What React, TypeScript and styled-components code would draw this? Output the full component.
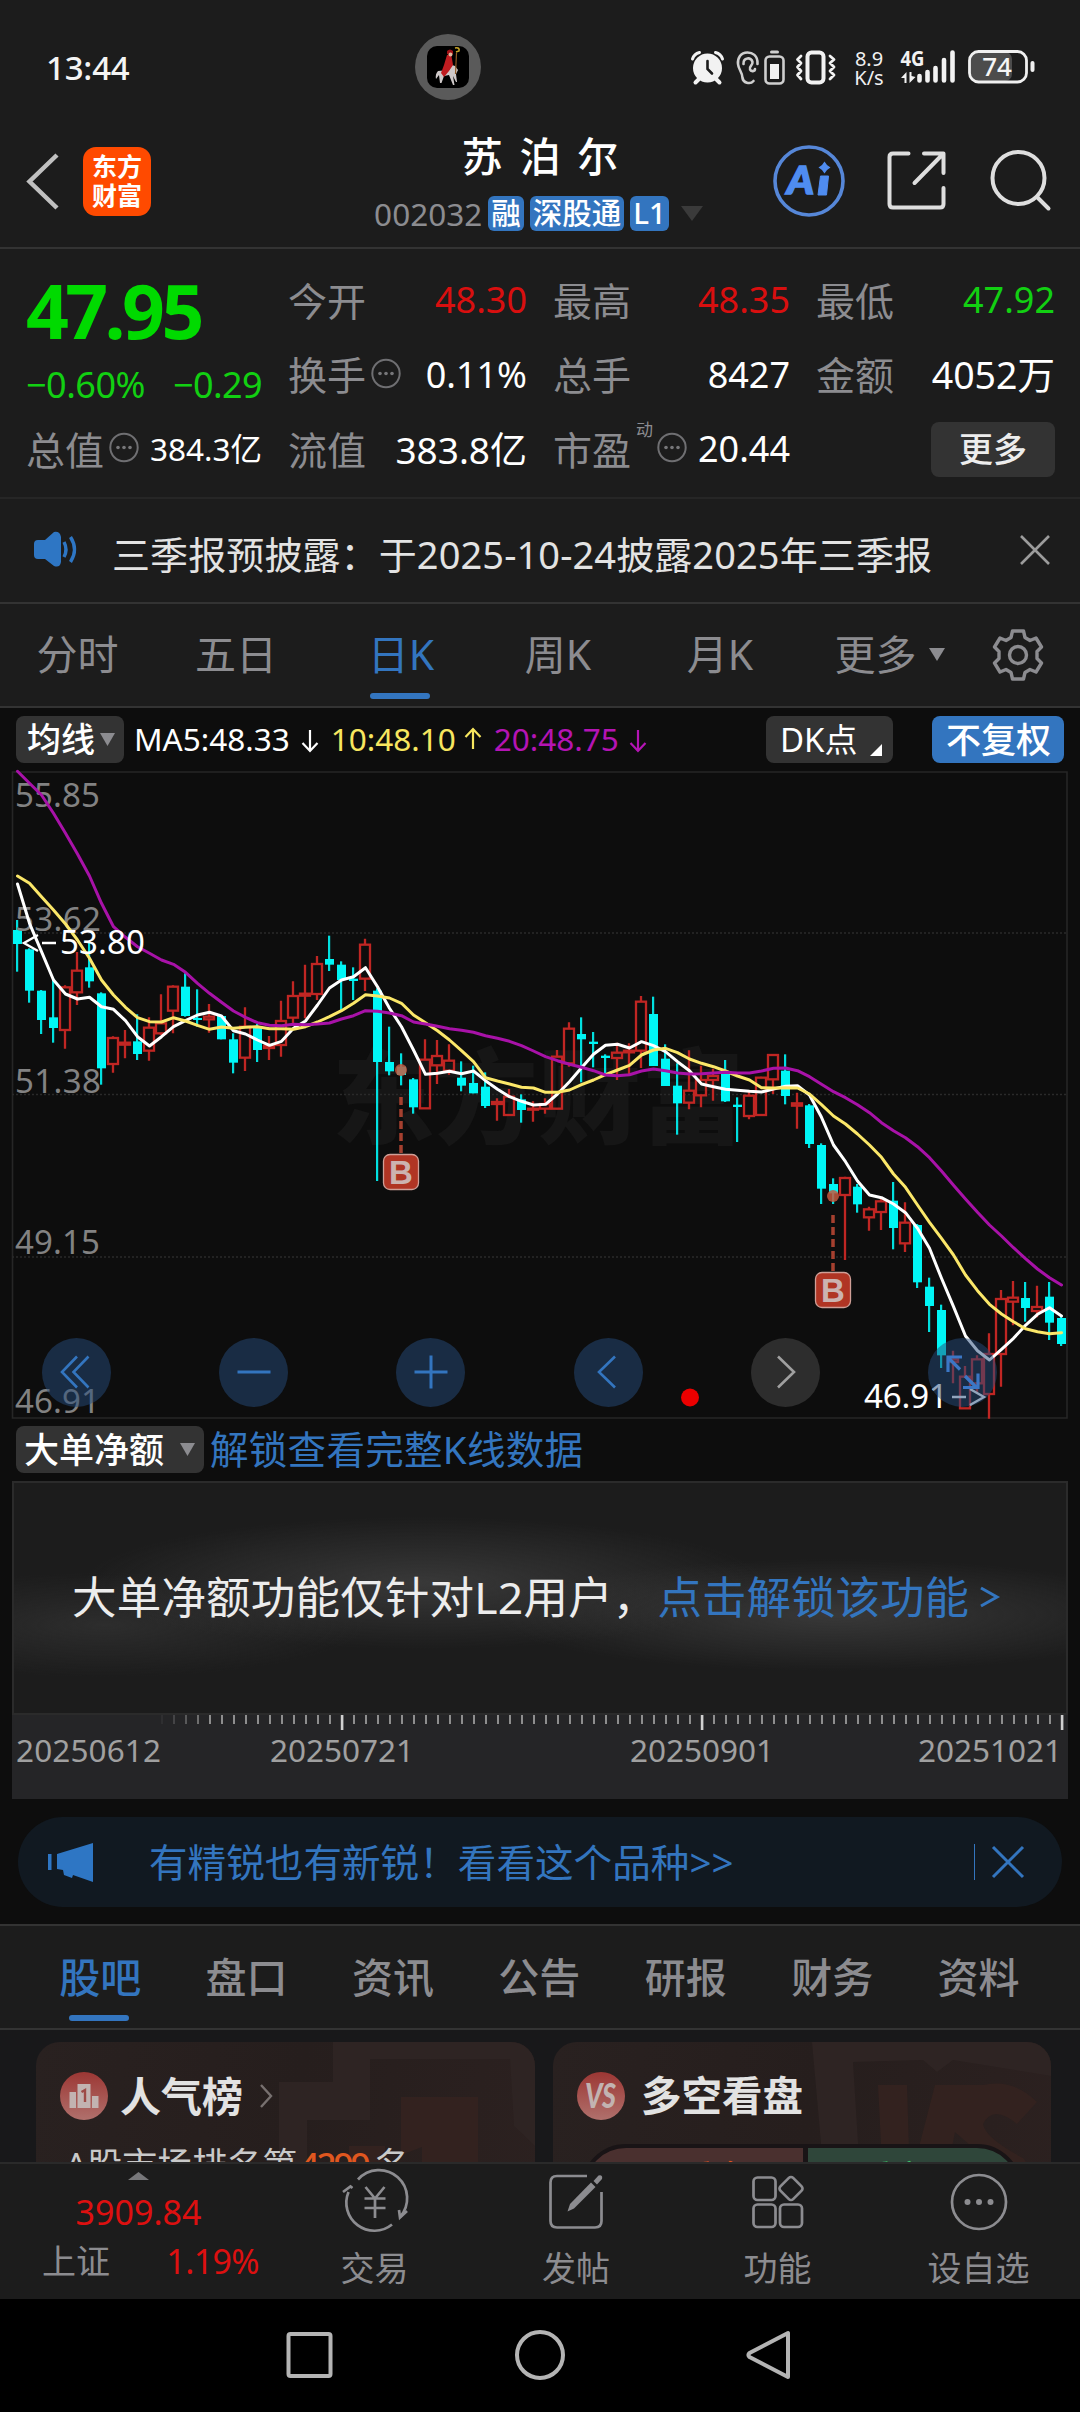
import React from "react";
import styled, { createGlobalStyle } from "styled-components";

const BLUE = "#3375bf";
const GREY = "#8c8c90";
const RED = "#d90f0f";
const GREEN = "#12d012";
const PANEL = "#1c1c1c";
const LINE = "#333333";

const Global = createGlobalStyle`
  html, body { margin: 0; padding: 0; background: #0d0d0d; }
  body { font-family: "Noto Sans", "Noto Sans CJK SC", sans-serif; color: #fff; }
  * { box-sizing: border-box; }
  svg { display: block; flex: none; overflow: visible; }
`;

const Page = styled.div`
  width: 1080px;
  height: 2412px;
  display: flex;
  flex-direction: column;
  overflow: hidden;
  background: #0d0d0d;
`;

const T = styled.span<{ $s: number; $c?: string; $w?: number; $ls?: number; $ml?: number; $pt?: number }>`
  font-size: ${(p) => p.$s}px;
  color: ${(p) => p.$c ?? "#fff"};
  font-weight: ${(p) => p.$w ?? 400};
  letter-spacing: ${(p) => p.$ls ?? 0}px;
  margin-left: ${(p) => p.$ml ?? 0}px;
  padding-top: ${(p) => p.$pt ?? 0}px;
  line-height: 1;
  white-space: pre;
`;

/* ---------- status bar ---------- */
const StatusBar = styled.header`
  height: 134px;
  display: grid;
  grid-template-columns: 415px 66px 1fr;
  align-items: center;
  background: ${PANEL};
`;
const Clock = styled.div`
  padding: 2px 0 0 46px;
  font-size: 33px;
  font-weight: 500;
  line-height: 1;
  letter-spacing: -0.2px;
  color: #f4f4f4;
`;
const Capsule = styled.div`
  width: 66px;
  height: 66px;
  border-radius: 50%;
  background: #5a5a5a;
  display: flex;
  align-items: center;
  justify-content: center;
`;
const StatusIcons = styled.div`
  display: flex;
  align-items: center;
  justify-content: flex-end;
  padding: 2px 45px 0 0;
`;
const Speed = styled.div`
  width: 34px;
  margin: 0 15px 0 15px;
  display: flex;
  flex-direction: column;
  align-items: center;
  font-size: 20px;
  line-height: 19px;
  color: #f0f0f0;
`;

/* ---------- title bar ---------- */
const TitleBar = styled.div`
  height: 115px;
  display: grid;
  grid-template-columns: 1fr 332px 1fr;
  background: ${PANEL};
  border-bottom: 2px solid ${LINE};
`;
const TitleLeft = styled.div`
  display: flex;
  align-items: center;
  gap: 21px;
  padding: 0 0 18px 24px;
`;
const Logo = styled.div`
  width: 68px;
  height: 69px;
  border-radius: 13px;
  background: #ff4a00;
  display: grid;
  place-content: center;
  font-size: 25px;
  line-height: 29px;
  font-weight: 700;
  text-align: center;
`;
const TitleCenter = styled.div`
  display: flex;
  flex-direction: column;
  align-items: center;
`;
const StockName = styled.h1`
  margin: 0;
  font-size: 41px;
  line-height: 44px;
  font-weight: 500;
  word-spacing: 6px;
`;
const CodeRow = styled.div`
  margin: 18px 3px 0 0;
  height: 36px;
  display: flex;
  align-items: center;
  gap: 6px;
`;
const Tag = styled.span`
  height: 35px;
  padding: 0 3px;
  border-radius: 6px;
  background: ${BLUE};
  font-size: 29.5px;
  line-height: 34px;
  font-weight: 500;
`;
const TitleRight = styled.div`
  display: flex;
  align-items: center;
  justify-content: flex-end;
  padding: 0 28px 18px 0;
`;

/* ---------- quote ---------- */
const Quote = styled.section`
  height: 250px;
  padding: 14px 24px 0 26px;
  display: grid;
  grid-template-columns: 236px 239px 237px 239px;
  column-gap: 26px;
  background: ${PANEL};
  border-bottom: 2px solid #262626;
`;
const QuoteCol = styled.div`
  display: flex;
  flex-direction: column;
`;
const Cell = styled.div<{ $h?: number }>`
  height: ${(p) => p.$h ?? 74.5}px;
  display: flex;
  align-items: center;
  & > span:last-child:not(:first-child) { margin-left: auto; }
`;
const Sup = styled.span`
  align-self: flex-start;
  margin: 9px 4px 0 5px;
  font-size: 17px;
  line-height: 1;
  color: ${GREY};
`;
const MoreButton = styled.button`
  width: 124px;
  height: 55px;
  margin-left: auto;
  border: 0;
  border-radius: 8px;
  background: #333;
  color: #ededed;
  font: 500 34px/51px "Noto Sans CJK SC", sans-serif;
  padding: 0 0 4px;
`;

/* ---------- news ---------- */
const News = styled.section`
  height: 105px;
  display: flex;
  align-items: center;
  padding: 0 25px 0 34px;
  background: ${PANEL};
  border-bottom: 2px solid ${LINE};
`;
const Push = styled.div`
  margin-left: auto;
  display: flex;
  align-items: center;
`;

/* ---------- tabs ---------- */
const Tabs = styled.nav<{ $cols: string; $h: number; $top?: boolean }>`
  height: ${(p) => p.$h}px;
  display: grid;
  grid-template-columns: ${(p) => p.$cols};
  background: ${PANEL};
  border-bottom: 2px solid ${LINE};
  border-top: ${(p) => (p.$top ? `2px solid ${LINE}` : "0")};
`;
const Tab = styled.div<{ $on?: boolean; $w?: number }>`
  position: relative;
  display: flex;
  align-items: center;
  justify-content: center;
  font-size: 41px;
  line-height: 1;
  font-weight: ${(p) => p.$w ?? 400};
  color: ${(p) => (p.$on ? BLUE : GREY)};
  &::after {
    content: "";
    display: ${(p) => (p.$on ? "block" : "none")};
    position: absolute;
    left: calc(50% - 31px);
    bottom: 7px;
    width: 60px;
    height: 6px;
    border-radius: 3px;
    background: ${BLUE};
  }
`;

/* ---------- chart ---------- */
const Legend = styled.div`
  height: 63px;
  display: flex;
  align-items: center;
  padding: 0 16px 0 16px;
`;
const Chip = styled.div<{ $w: number; $blue?: boolean; $pl?: number; $ml?: number }>`
  width: ${(p) => p.$w}px;
  height: 47px;
  margin-left: ${(p) => p.$ml ?? 0}px;
  border-radius: 8px;
  background: ${(p) => (p.$blue ? BLUE : "#333")};
  display: flex;
  align-items: center;
  padding-left: ${(p) => p.$pl ?? 10}px;
`;
const ChartArea = styled.div`
  position: relative;
  height: 648px;
`;
const Controls = styled.div`
  position: absolute;
  left: 42px;
  right: 83px;
  top: 567px;
  display: flex;
  justify-content: space-between;
`;
const RoundBtn = styled.div<{ $off?: boolean }>`
  width: 69px;
  height: 69px;
  border-radius: 50%;
  background: ${(p) => (p.$off ? "rgba(58,58,58,.72)" : "rgba(37,76,124,.5)")};
  display: grid;
  place-items: center;
`;
const SubLegend = styled.div`
  height: 62px;
  display: flex;
  align-items: center;
  padding-left: 16px;
`;
const LockBox = styled.div`
  height: 235px;
  margin: 0 12px;
  padding: 0 0 2px 58px;
  display: flex;
  align-items: center;
  border: 2px solid #2b2b2b;
  background:
    radial-gradient(ellipse 340px 66px at 410px 100px, rgba(66,66,66,.75), transparent),
    radial-gradient(ellipse 340px 56px at 820px 132px, rgba(66,66,66,.75), transparent),
    radial-gradient(ellipse 260px 52px at 90px 142px, rgba(52,52,52,.7), transparent),
    ${PANEL};
`;
const DateStrip = styled.div`
  height: 84px;
  margin: 0 12px;
  background: #252527;
`;

/* ---------- promo ---------- */
const Promo = styled.div`
  height: 90px;
  margin: 18px 18px 17px;
  padding: 0 38px 0 30px;
  border-radius: 45px;
  background: #111921;
  display: flex;
  align-items: center;
`;
const Bar = styled.i`
  width: 1px;
  height: 36px;
  margin-right: 17px;
  background: ${BLUE};
`;

/* ---------- cards ---------- */
const Cards = styled.section`
  height: 132px;
  padding: 12px 29px 0 36px;
  display: grid;
  grid-template-columns: 499px 498px;
  column-gap: 18px;
  overflow: hidden;
  background: #18181a;
`;
const Card = styled.article`
  position: relative;
  height: 240px;
  padding-top: 30px;
  border-radius: 24px;
  overflow: hidden;
  background: linear-gradient(100deg, #292120, #261e1d 50%, #2c2120);
`;
const CardArt = styled.svg`
  position: absolute;
  right: 0;
  top: 0;
`;
const CardHead = styled.div`
  position: relative;
  height: 48px;
  padding-left: 24px;
  display: flex;
  align-items: center;
`;
const Rank = styled.p`
  position: relative;
  margin: 27px 0 0 29px;
  font-size: 35px;
  line-height: 36px;
  color: #c9c9c9;
  white-space: nowrap;
  b { color: #e0571f; font-weight: 500; font-size: 35px; margin: 0 7px 0 2px; letter-spacing: -3px; }
`;
const Versus = styled.div`
  position: relative;
  width: 441px;
  height: 90px;
  margin: 24px 0 0 28px;
  border: 4px solid #191416;
  border-radius: 45px;
  overflow: hidden;
  display: grid;
  grid-template-columns: 218px 1fr;
  column-gap: 5px;
  background: #191416;
`;
const Side = styled.div<{ $bg: string; $c: string; $dx: number }>`
  background: ${(p) => p.$bg};
  color: ${(p) => p.$c};
  font-size: 34px;
  line-height: 1;
  padding-top: 12px;
  text-align: center;
  text-indent: ${(p) => p.$dx}px;
`;

/* ---------- bottom bar ---------- */
const BottomBar = styled.footer`
  height: 137px;
  display: grid;
  grid-template-columns: 274px 201px 202px 201px 201px;
  background: ${PANEL};
  border-top: 2px solid #2a2a2a;
`;
const IndexBox = styled.div`
  display: flex;
  flex-direction: column;
  align-items: center;
  padding: 8px 0 0 3px;
`;
const IndexRow = styled.div`
  align-self: stretch;
  display: flex;
  justify-content: space-between;
  align-items: center;
  margin-top: 15px;
  padding: 0 15px 0 39px;
`;
const Action = styled.div`
  display: flex;
  flex-direction: column;
  align-items: center;
  padding-top: 8px;
  gap: 19px;
`;
const NavBar = styled.nav`
  height: 113px;
  display: flex;
  align-items: center;
  background: #000;
`;

/* ---------- price data: [rising, high, low, bodyTop, bodyBottom] in thirds of a pixel from `top` ---------- */
type Bar5 = [number, number, number, number, number];
interface Segment { top: number; bars: Bar5[]; ma5: number[]; ma10: number[]; ma20: number[]; }
const SEGMENTS: Segment[] = [
  {
    top: 760,
    bars: [
      [0,480,635,510,552],[0,565,728,568,692],[0,690,822,692,780],[0,655,848,772,804],[1,676,866,682,810],[1,576,735,632,697],
      [0,545,683,622,664],[0,697,974,700,925],[1,829,938,834,912],[1,810,895,848,854],[0,763,900,844,882],[1,772,902,803,872],
      [1,703,825,790,820],[1,676,820,680,752],[0,640,770,680,768],[0,688,800,774,780],[1,732,818,770,778],[0,765,838,768,838],
      [0,820,940,838,908],[1,742,933,800,893],[0,792,906,800,870],[1,828,900,858,864],[1,722,890,783,855],[1,664,795,708,773],
      [1,614,775,701,707],[1,588,720,612,702],[0,527,633,597,614],[0,604,750,614,660],[0,622,720,656,663],
    ],
    ma5: [372,490,575,660,702,717,712,740,748,782,830,858,830,800,782,765,757,768,812,822,840,856,844,805,783,735,684,660,650],
    ma10: [348,370,410,450,492,540,595,660,705,742,773,785,786,773,783,796,808,801,805,802,800,806,806,808,800,786,770,752,730],
    ma20: [34,70,105,160,220,282,348,430,500,532,560,580,600,613,637,670,700,727,753,772,788,796,797,793,794,792,789,777,767],
  },
  {
    top: 900,
    bars: [
      [1,116,273,134,236],[0,265,843,272,486],[0,380,526,486,514],[0,460,556,500,525],[0,534,641,538,622],[1,418,626,479,625],
      [1,420,552,468,496],[1,433,524,482,512],[0,484,574,533,557],[0,497,580,549,580],[0,517,624,560,618],[1,595,662,606,612],
      [1,567,646,590,645],[0,583,668,598,630],[1,604,665,626,629],[1,595,641,612,626],[1,450,628,470,626],[1,367,500,386,490],
      [0,352,547,402,418],[0,396,502,425,432],[0,463,522,467,474],[1,428,540,458,474],[1,430,522,452,457],[1,288,504,305,452],
      [0,290,498,342,498],[0,433,556,476,558],[0,490,704,557,610],[1,451,628,572,608],[1,497,622,540,586],[1,506,602,528,540],
    ],
    ma5: [203,260,325,380,450,523,520,514,521,513,542,568,590,604,615,613,582,545,503,463,436,433,444,425,437,455,485,512,552,560],
    ma10: [284,288,294,310,345,368,392,420,452,485,533,543,552,562,564,577,577,570,554,540,524,510,496,465,450,445,458,477,490,500],
    ma20: [332,334,339,347,366,372,379,386,391,397,407,415,424,437,453,470,482,493,502,512,525,527,524,513,507,512,519,522,521,519],
  },
  {
    top: 980,
    bars: [
      [0,240,366,280,364],[0,352,486,374,381],[1,330,418,347,408],[1,290,406,293,405],[1,223,342,225,298],[0,223,373,272,348],
      [1,338,446,370,377],[0,372,504,376,492],[0,490,672,495,626],[0,595,672,612,640],[1,590,840,594,645],[0,612,698,620,673],
      [1,680,752,688,712],[1,655,750,664,696],[0,606,808,662,744],[1,667,816,728,790],[0,732,924,735,907],[0,893,1056,920,978],
      [0,974,1164,990,1126],[1,1112,1210,1138,1146],[1,1158,1286,1190,1285],[1,1126,1240,1138,1210],[1,1060,1316,1122,1242],[1,930,1220,957,1122],
      [1,903,1036,953,965],[0,906,1025,954,984],[1,917,1012,981,993],[0,906,1080,950,1028],[0,1008,1098,1014,1092],
    ],
    ma5: [328,331,334,336,327,319,317,345,412,495,545,603,645,653,672,698,745,805,895,980,1068,1112,1140,1108,1075,1036,1003,983,1008],
    ma10: [273,288,300,323,324,323,324,342,374,408,432,462,495,532,582,622,675,727,775,825,885,932,973,1002,1025,1046,1055,1061,1058],
    ma20: [277,279,279,273,265,264,272,290,313,335,353,374,398,428,452,473,500,533,573,616,657,697,735,768,803,836,867,893,915],
  },
];
const barX = (i: number) => 17 + i * 12;
const bars = SEGMENTS.flatMap((s) => s.bars.map(([up, ...ys]) => ({ up: up === 1, y: ys.map((v) => s.top + v / 3) })));
const maPoints = (key: "ma5" | "ma10" | "ma20") =>
  SEGMENTS.flatMap((s) => s[key].map((v) => s.top + v / 3))
    .map((y, i) => `${barX(i) + 0.5},${y.toFixed(1)}`)
    .join(" ");

const UP = "#c02623";
const DOWN = "#00f6f6";

const Candle = ({ x, up, y }: { x: number; up: boolean; y: number[] }) => {
  const [hi, lo, top, bot] = y;
  if (!up)
    return (
      <g fill={DOWN}>
        <rect x={x - 1} y={hi} width={2.2} height={lo - hi} opacity={0.9} />
        <rect x={x - 4} y={top} width={9} height={Math.max(bot - top, 2)} />
      </g>
    );
  return (
    <g stroke={UP} strokeWidth={2.3} fill="none">
      <path d={`M${x} ${hi}V${Math.max(top, hi)}M${x} ${bot}V${Math.max(lo, bot)}`} />
      <rect x={x - 5} y={top} width={10} height={Math.max(bot - top, 1)} />
    </g>
  );
};

const BuyMark = ({ x, dot, top }: { x: number; dot: number; top: number }) => (
  <g>
    <circle cx={x} cy={dot} r={6} fill="#c4593f" opacity={0.85} />
    <path d={`M${x} ${top - 57}V${top}`} stroke="#a6402f" strokeWidth={3.5} strokeDasharray="8 4" />
    <rect x={x - 17.5} y={top + 0.5} width={35} height={35} rx={6.5} fill="#b03524" stroke="#cf9f97" strokeWidth={1.3} />
    <text x={x} y={top + 30} fontSize={33} fontWeight={700} fontFamily="Liberation Sans" textAnchor="middle" fill="#ccb3b0">B</text>
  </g>
);

const KLine = () => (
  <svg width="1080" height="648" viewBox="0 771 1080 648">
    <text x="332" y="1136" fontSize="103" fontWeight="900" fill="#161616">东方财富</text>
    <path d="M12.5 772H1067V1418H12.5Z" fill="none" stroke="#262626" strokeWidth="1.6" />
    <path d="M12 933H1067M12 1094.5H1067M12 1257H1067" stroke="#2a2a2a" strokeWidth="1.5" strokeDasharray="2 2" />
    {bars.map((b, i) => <Candle key={i} x={barX(i)} up={b.up} y={b.y} />)}
    <g fontSize="33" fill="#828282">
      <text x="15" y="806.500" textLength="85">55.85</text>
      <text x="15" y="930.500" textLength="86">53.62</text>
      <text x="15" y="1092.500" textLength="86">51.38</text>
      <text x="15" y="1254" textLength="85">49.15</text>
      <text x="15" y="1413" textLength="85">46.91</text>
    </g>
    <g fill="none" strokeWidth="3" strokeLinejoin="round" strokeLinecap="round">
      <polyline points={maPoints("ma5")} stroke="#fff" />
      <polyline points={maPoints("ma10")} stroke="#fbe769" />
      <polyline points={maPoints("ma20")} stroke="#a812a8" />
    </g>
    <g fontSize="33" fill="#fff">
      <text x="60" y="954" textLength="85">53.80</text>
      <text x="864" y="1407.500" textLength="84">46.91</text>
    </g>
    <path d="M38 935L24 943L38 951M42 943H56M952 1397H966M970 1389L984 1397L970 1405" stroke="#fff" strokeWidth="2.4" fill="none" />
    <BuyMark x={401} dot={1070} top={1154} />
    <BuyMark x={833} dot={1196} top={1272} />
    <circle cx="690" cy="1397.500" r="9" fill="#ec0000" />
  </svg>
);

const Glyph = ({ d, c = BLUE, w = 2.6 }: { d: string; c?: string; w?: number }) => (
  <svg width="40" height="40" viewBox="-20 -20 40 40" fill="none" stroke={c} strokeWidth={w}><path d={d} /></svg>
);

const Dots = ({ ml = 5 }: { ml?: number }) => (
  <svg width="30" height="30" viewBox="-15 -15 30 30" style={{ marginLeft: ml }}>
    <circle cy="-1.500" r="13.700" fill="none" stroke="#6f6f72" strokeWidth="2" />
    <g fill="#77777a"><circle cx="-6" cy="-1.500" r="1.800" /><circle cy="-1.500" r="1.800" /><circle cx="6" cy="-1.500" r="1.800" /></g>
  </svg>
);

const Caret = ({ w = 15, h = 13, c = GREY, ml = 0, up = false }) => (
  <svg width={w} height={h} viewBox="0 0 10 10" preserveAspectRatio="none" style={{ marginLeft: ml }}>
    <path d={up ? "M0 10H10L5 0Z" : "M0 0H10L5 10Z"} fill={c} />
  </svg>
);

const Arrow = ({ c, up = false, ml }: { c: string; up?: boolean; ml: number }) => (
  <svg width="18" height="24" viewBox="-9 -12 18 24" fill="none" stroke={c} strokeWidth="2.200" style={{ marginLeft: ml }}>
    <path d={up ? "M0 10V-9M-7.500 -2L0 -10L7.500 -2" : "M0 -9V11M-7.500 4L0 12L7.500 4"} />
  </svg>
);

const Pair = ({ label, value, c = "#fff", dots = false, s = 36 }: { label: string; value: string; c?: string; dots?: boolean; s?: number }) => (
  <Cell>
    <T $s={39} $c={GREY}>{label}</T>
    {dots && <Dots />}
    <T $s={s} $c={c}>{value}</T>
  </Cell>
);

const Ticks = () => (
  <svg width="1056" height="84" viewBox="12 1716 1056 84">
    {Array.from({ length: 76 }, (_, i) => {
      const x = 162 + i * 12;
      const major = (x - 342) % 360 === 0;
      return (
        <rect key={x} x={x - (major ? 1.2 : 1)} y={1716} width={major ? 2.6 : 2} height={major ? 15 : 9}
          fill={major ? "#d0d0d0" : "#8e8e8e"} opacity={i < 4 ? 0.1 + i * 0.2 : 1} />
      );
    })}
    <g fontSize="31.500" fill="#a0a0a0">
      <text x="16" y="1763" textLength="145">20250612</text>
      <text x="270" y="1763" textLength="144">20250721</text>
      <text x="630" y="1763" textLength="144">20250901</text>
      <text x="918" y="1763" textLength="144">20251021</text>
    </g>
  </svg>
);

const StatusGlyphs = () => (
  <svg width="146" height="38" viewBox="691 50 146 38" fill="none" stroke="#f2f2f2" strokeLinecap="round">
    <circle cx="707.500" cy="69" r="14.500" fill="#f2f2f2" stroke="none" />
    <path d="M692.500 60Q694 55 699.500 53.500M715.500 53.500Q721 55 722.500 60" strokeWidth="3" />
    <path d="M699 80L695.500 83.500M716 80L719.500 83.500" strokeWidth="4" />
    <path d="M707.500 62V70L712 74.500" stroke={PANEL} strokeWidth="2.600" />
    <g stroke="#cfcfcf" strokeWidth="2.600">
      <path d="M757.500 65C758 56 752 53.500 747.500 53.500C740.500 53.500 737.500 59 738 65C738.500 71 742.500 73 742.500 79C743 83.500 750 86 753.500 82" />
      <path d="M743.500 65C743 58.500 751.500 57.500 752.500 63C753 67 748.500 67 750 70.500C751 73 755 72.500 755 70" />
      <rect x="765.500" y="57.500" width="18" height="27" rx="4" />
      <path d="M771.500 53H777.500" strokeWidth="3" />
    </g>
    <rect x="770" y="65" width="9" height="15" fill="#f2f2f2" stroke="none" />
    <rect x="807.500" y="53.500" width="16" height="30" rx="4" strokeWidth="4" />
    <path d="M801 57L797.500 60.500L801 64L797.500 68L801 72L797.500 76L801 80M830 57L834 60.500L830 64L834 68L830 72L834 76L830 80" strokeWidth="2.800" strokeLinejoin="round" />
  </svg>
);

const SignalGlyphs = () => (
  <svg width="134" height="38" viewBox="900 50 134 38">
    <text x="899.500" y="67" fontSize="21" fontWeight="700" fill="#f2f2f2" textLength="24" lengthAdjust="spacingAndGlyphs">4G</text>
    <g stroke="#f2f2f2" strokeWidth="4.600" strokeLinecap="round">
      <path d="M918.500 77V81.500M926.500 73V81.500M934.500 69V81.500M943 61V81.500M951.500 53.500V81.500" />
    </g>
    <path d="M900 79L905.500 73V84H903.500V79ZM908.500 73H910.500V77L914.500 78L908.500 84Z" fill="#f2f2f2" />
    <rect x="969" y="53" width="42" height="29" rx="7" fill="#4c4c4c" />
    <rect x="968.500" y="52.500" width="57" height="30.500" rx="9" fill="none" stroke="#f0f0f0" strokeWidth="2.800" />
    <rect x="1029.500" y="62" width="4" height="11" rx="2" fill="#f0f0f0" />
    <text x="996" y="77" fontSize="26" fontWeight="500" fill="#f6f6f6" textAnchor="middle">74</text>
  </svg>
);

const Avatar = () => (
  <svg width="42" height="42" viewBox="0 0 42 42">
    <rect width="42" height="42" rx="10" fill="#000" />
    <path d="M11 25Q8 28 9 33L12 29L13 37H14.500L17 30L22 29L26 39H27.500L26 30L29 36H30L29 28L31 24L28 20L25 19L22 24Z" fill="#cfc9c9" />
    <path d="M20 9L24 8L25 13L26 19L22 25L17 31L14 27L17 19Z" fill="#c01c20" />
    <path d="M20 5Q23 2 26 5V8H20Z" fill="#a01015" />
    <circle cx="23.500" cy="8.500" r="2" fill="#e4b79c" />
    <path d="M29.500 7L28.500 28" stroke="#8f5a25" strokeWidth="1.200" />
    <path d="M28 2Q33 1 32 5L29 6" stroke="#c8a428" strokeWidth="1.600" fill="none" />
  </svg>
);

const ACTIONS = [
  {
    label: "交易",
    icon: (
      <g>
        <path d="M-17 -22.500A28 28 0 0 1 25 15M17 22.500A28 28 0 0 1 -26.500 -10" />
        <path d="M-32 -10L-24.500 -15.500L-22.500 -14M32 9L25 15.500L24 8" />
        <path d="M-9.500 -15L0 -3.500L9.500 -15M0 -3.500V16M-10.500 -3.500H10.500M-10.500 6H10.500" />
      </g>
    ),
  },
  {
    label: "发帖",
    icon: (
      <g>
        <path d="M11 -26H-19Q-25.500 -26 -25.500 -19.500V19Q-25.500 25.500 -19 25.500H19Q25.500 25.500 25.500 19V-10" />
        <path d="M-8.500 9.500L-6 2L15 -19.500L19.500 -15L-2 6.500Z" fill={GREY} stroke="none" />
        <path d="M17.500 -21L22.500 -26.500Q27 -27.500 26 -23L21 -17.500Z" fill={GREY} stroke="none" />
      </g>
    ),
  },
  {
    label: "功能",
    icon: (
      <g>
        <rect x="-24.500" y="-24.500" width="22" height="22.500" rx="4" />
        <rect x="-24.500" y="2.500" width="22" height="22.500" rx="4" />
        <rect x="2" y="2.500" width="22" height="22.500" rx="4" />
        <rect x="4" y="-22.500" width="18" height="18" rx="3" transform="rotate(45 13 -13.500)" />
      </g>
    ),
  },
  {
    label: "设自选",
    icon: (
      <g>
        <circle r="27" />
        <g fill={GREY} stroke="none"><circle cx="-11.500" r="3" /><circle r="3" /><circle cx="11.500" r="3" /></g>
      </g>
    ),
  },
];

export default function App() {
  return (
    <Page>
      <Global />
      <StatusBar>
        <Clock>13:44</Clock>
        <Capsule><Avatar /></Capsule>
        <StatusIcons>
          <StatusGlyphs />
          <Speed><span>8.9</span><span>K/s</span></Speed>
          <SignalGlyphs />
        </StatusIcons>
      </StatusBar>

      <TitleBar>
        <TitleLeft>
          <svg width="38" height="62" viewBox="24 150 38 62" fill="none" stroke="#c0c0c0" strokeWidth="4.500"><path d="M57 155L29.500 181.500L57 208" /></svg>
          <Logo>东方<br />财富</Logo>
        </TitleLeft>
        <TitleCenter>
          <StockName>苏 泊 尔</StockName>
          <CodeRow>
            <T $s={31.5} $c={GREY}>002032</T>
            <Tag>融</Tag><Tag>深股通</Tag><Tag>L1</Tag>
            <Caret w={22} h={15} c="#3a3a3a" ml={6} />
          </CodeRow>
        </TitleCenter>
        <TitleRight>
          <svg width="72" height="72" viewBox="-36 -36 72 72">
            <circle r="34" fill="none" stroke="#5687d8" strokeWidth="3.600" />
            <text x="-22" y="13" fontSize="38" fontWeight="900" fontStyle="italic" fontFamily="Lato, sans-serif" fill="#4f8cf0" stroke="#4f8cf0" strokeWidth="1.500" textLength="27" lengthAdjust="spacingAndGlyphs">A</text>
            <path d="M11.500 -5H19.500L17.500 14H9Z" fill="#4f8cf0" stroke="#4f8cf0" strokeWidth="1" strokeLinejoin="round" />
            <path d="M15.500 -19.500Q17.500 -15.500 21.500 -13.500Q17.500 -11.500 15.500 -7.500Q13.500 -11.500 9.500 -13.500Q13.500 -15.500 15.500 -19.500Z" fill="#4f8cf0" />
          </svg>
          <svg width="58" height="58" viewBox="888 153 58 58" fill="none" stroke="#dedede" strokeWidth="4" strokeLinecap="round" strokeLinejoin="round" style={{ marginLeft: 43 }}>
            <path d="M908.500 154.500H893Q889.500 154.500 889.500 158V205Q889.500 208.500 893 208.500H940Q943.500 208.500 943.500 205V189M924 154.500H943.500V174M942 156L914.500 184" />
          </svg>
          <svg width="62" height="62" viewBox="990 150 62 62" fill="none" stroke="#dedede" strokeWidth="4" strokeLinecap="round" style={{ marginLeft: 44 }}>
            <circle cx="1018.500" cy="178" r="26" /><path d="M1037 197L1048.500 208.500" />
          </svg>
        </TitleRight>
      </TitleBar>

      <Quote>
        <QuoteCol>
          <Cell $h={96}><T $s={75} $c="#00da00" $w={700} $ls={-3.6}>47.95</T></Cell>
          <Cell $h={53}><T $s={36} $c={GREEN} $ls={-0.5}>−0.60%</T><T $s={36} $c={GREEN} $ls={-0.6}>−0.29</T></Cell>
          <Pair label="总值" value="384.3亿" dots s={31.5} />
        </QuoteCol>
        <QuoteCol>
          <Pair label="今开" value="48.30" c={RED} />
          <Pair label="换手" value="0.11%" dots />
          <Pair label="流值" value="383.8亿" s={37} />
        </QuoteCol>
        <QuoteCol>
          <Pair label="最高" value="48.35" c={RED} />
          <Pair label="总手" value="8427" />
          <Cell>
            <T $s={39} $c={GREY}>市盈</T><Sup>动</Sup><Dots ml={0} /><T $s={36}>20.44</T>
          </Cell>
        </QuoteCol>
        <QuoteCol>
          <Pair label="最低" value="47.92" c={GREEN} />
          <Pair label="金额" value="4052万" s={37.5} />
          <Cell><MoreButton>更多</MoreButton></Cell>
        </QuoteCol>
      </Quote>

      <News>
        <svg width="45" height="38" viewBox="34 532 45 38">
          <path d="M34 545Q34 541 38 541H45L54 533Q60 532 61 538V563Q60 569 54 567L45 560H38Q34 560 34 556Z" fill="#2e76c4" />
          <path d="M64 543Q68 550.500 64 558M70.500 538Q78.500 550.500 70.500 563" fill="none" stroke="#2e76c4" strokeWidth="3.400" />
        </svg>
        <T $s={38} $c="#e3e3e3" $ml={33} $ls={0.1} $pt={8}>三季报预披露：于2025-10-24披露2025年三季报</T>
        <Push><Glyph d="M-14 -14L14 14M14 -14L-14 14" c="#9c9c9c" w={2.6} /></Push>
      </News>

      <Tabs $h={104} $cols="155px 162px 168px 146px 178px 161px 1fr">
        <Tab>分时</Tab><Tab>五日</Tab><Tab $on>日K</Tab><Tab>周K</Tab><Tab>月K</Tab>
        <Tab>更多<Caret w={16} h={13} ml={12} /></Tab>
        <Tab>
          <svg width="54" height="54" viewBox="-27 -27 54 54" fill="none" stroke={GREY} strokeWidth="3.400" strokeLinejoin="round" style={{ marginRight: 14 }}>
            <path d="M-5.500 -24H5.500L7 -17.500L12 -14.500L18 -17L23.500 -8L19 -3.500V3.500L23.500 8L18 17L12 14.500L7 17.500L5.500 24H-5.500L-7 17.500L-12 14.500L-18 17L-23.500 8L-19 3.500V-3.500L-23.500 -8L-18 -17L-12 -14.500L-7 -17.500Z" />
            <circle r="8.500" />
          </svg>
        </Tab>
      </Tabs>

      <Legend>
        <Chip $w={108} $pl={11}><T $s={34} $w={500}>均线</T><Caret ml={5} /></Chip>
        <T $s={31.5} $ml={10}>MA5:48.33</T><Arrow c="#fff" ml={11} />
        <T $s={31.5} $c="#f7e65f" $ml={12}>10:48.10</T><Arrow c="#f7e65f" up ml={8} />
        <T $s={31.5} $c="#b414b4" $ml={12}>20:48.75</T><Arrow c="#b414b4" ml={10} />
        <Push>
          <Chip $w={127} $pl={14}>
            <T $s={33}>DK点</T>
            <svg width="12" height="12" viewBox="0 0 12 12" style={{ marginLeft: 12, marginTop: 22 }}><path d="M12 0V12H0Z" fill="#fff" /></svg>
          </Chip>
          <Chip $w={132} $pl={14} $ml={39} $blue><T $s={35} $w={500}>不复权</T></Chip>
        </Push>
      </Legend>
      <ChartArea>
        <KLine />
        <Controls>
          <RoundBtn><Glyph d="M0 -15.500L-15 0L0 15.500M11.500 -15.500L-3.500 0L11.500 15.500" /></RoundBtn>
          <RoundBtn><Glyph d="M-16.500 0H16.500" w={3} /></RoundBtn>
          <RoundBtn><Glyph d="M-16.500 0H16.500M0 -16.500V16.500" w={3} /></RoundBtn>
          <RoundBtn><Glyph d="M7 -15.500L-9 0L7 15.500" /></RoundBtn>
          <RoundBtn $off><Glyph d="M-7 -15.500L9 0L-7 15.500" c="#a0a0a0" /></RoundBtn>
          <RoundBtn><Glyph d="M-2 -2.500L-14 -14.500M-14 0V-15H0M3 4L15 16M1 15.500H16V1.500" c="#3b77c6" w={3.2} /></RoundBtn>
        </Controls>
      </ChartArea>
      <SubLegend>
        <Chip $w={188} $pl={8}><T $s={35} $w={500}>大单净额</T><Caret ml={16} w={15} h={13} /></Chip>
        <T $s={38.5} $c={BLUE} $ml={6} $ls={0.3}>解锁查看完整K线数据</T>
      </SubLegend>
      <LockBox>
        <T $s={44.5} $c="#ececec" $ls={0.2}>大单净额功能仅针对L2用户，</T>
        <T $s={44.5} $c={BLUE} $ml={0}>点击解锁该功能</T>
        <svg width="20" height="24" viewBox="0 0 20 24" fill="none" stroke={BLUE} strokeWidth="3" style={{ marginLeft: 11 }}><path d="M1 3L17 12L1 21" /></svg>
      </LockBox>
      <DateStrip><Ticks /></DateStrip>

      <Promo>
        <svg width="46" height="40" viewBox="48 1843 46 40" fill="#2e76c4">
          <path d="M48 1855H51.500V1871H48ZM57 1855L93 1844V1883L73 1876L72 1879L64 1876L63 1871L57 1870Z" />
        </svg>
        <T $s={38.5} $c={BLUE} $ml={55} $ls={0.1}>{"有精锐也有新锐！看看这个品种>>"}</T>
        <Push>
          <Bar />
          <svg width="32" height="32" viewBox="-16 -16 32 32" stroke={BLUE} strokeWidth="3"><path d="M-15 -15L15 15M15 -15L-15 15" /></svg>
        </Push>
      </Promo>

      <Tabs $h={106} $top $cols="27px repeat(7, 146.4px)">
        <i />
        <Tab $on $w={500}>股吧</Tab><Tab $w={500}>盘口</Tab><Tab $w={500}>资讯</Tab><Tab $w={500}>公告</Tab>
        <Tab $w={500}>研报</Tab><Tab $w={500}>财务</Tab><Tab $w={500}>资料</Tab>
      </Tabs>

      <Cards>
        <Card>
          <CardArt width="270" height="240" viewBox="229 0 270 240">
            <path d="M243 240V40H297V0H499V104L478 84L474 17H334V78H271V240Z" fill="#2e2423" />
            <path d="M365 55H442V240H386V105L365 113ZM313 104H349V240H313Z" fill="#33221f" />
          </CardArt>
          <CardHead>
            <svg width="48" height="48" viewBox="-24 -24 48 48">
              <defs><linearGradient id="badge" x1="0" y1="0" x2="0" y2="1"><stop offset="0" stopColor="#9c3734" /><stop offset="1" stopColor="#b0706c" /></linearGradient></defs>
              <circle r="24" fill="url(#badge)" />
              <path d="M-14.500 -4H-8V12H-14.500ZM-6.500 -12H6.500V12H-6.500ZM8 0H14.500V12H8Z" fill="#c2b3b1" />
              <path d="M-2.500 -4L1 -6V6" fill="none" stroke="#9e4a46" strokeWidth="2.400" />
            </svg>
            <T $s={41} $w={700} $c="#e2e2e2" $ml={12}>人气榜</T>
            <svg width="13" height="24" viewBox="0 0 13 24" fill="none" stroke="#77706f" strokeWidth="2.400" style={{ marginLeft: 17 }}><path d="M1 1L11 12L1 23" /></svg>
          </CardHead>
          <Rank>A股市场排名第<b>4299</b>名</Rank>
        </Card>
        <Card>
          <CardArt width="250" height="240" viewBox="248 0 250 240">
            <path d="M259 0L275 180H310L300 20L370 18L384 30L400 18L498 34V0Z" fill="#2e2423" />
            <path d="M325 43H354L357 140L382 43H430Q460 36 484 60L464 82Q440 62 430 82Q432 96 470 116Q486 134 476 180H430L436 120L402 90L384 180H332Z" fill="#33221f" />
          </CardArt>
          <CardHead>
            <svg width="48" height="48" viewBox="-24 -24 48 48">
              <circle r="24" fill="url(#badge)" />
              <text x="-16" y="12" fontSize="34" fontWeight="900" fontStyle="italic" fontFamily="Lato, sans-serif" fill="#c2b3b1" textLength="31" lengthAdjust="spacingAndGlyphs">VS</text>
            </svg>
            <T $s={40.5} $w={700} $c="#e2e2e2" $ml={16}>多空看盘</T>
          </CardHead>
          <Versus>
            <Side $bg="#4a302f" $c="#e0571f" $dx={40}>看多</Side>
            <Side $bg="#2f463a" $c="#3fc36a" $dx={-40}>看空</Side>
          </Versus>
        </Card>
      </Cards>

      <BottomBar>
        <IndexBox>
          <Caret up w={21} h={8} c="#77777a" />
          <T $s={34} $c="#dd1010" $pt={15}>3909.84</T>
          <IndexRow><T $s={34} $c={GREY}>上证</T><T $s={34} $c="#dd1010" $ls={-0.6}>1.19%</T></IndexRow>
        </IndexBox>
        {ACTIONS.map((a) => (
          <Action key={a.label}>
            <svg width="60" height="60" viewBox="-30 -30 60 60" fill="none" stroke={GREY} strokeWidth="2.700">{a.icon}</svg>
            <T $s={34} $c={GREY}>{a.label}</T>
          </Action>
        ))}
      </BottomBar>

      <NavBar>
        <svg width="1080" height="60" viewBox="0 2325 1080 60" fill="none" stroke="#b4b4b4" strokeWidth="4" strokeLinejoin="round">
          <rect x="288.500" y="2333" width="42" height="42" rx="2" />
          <circle cx="540" cy="2354" r="23" />
          <path d="M788 2332V2376L749.500 2356Q747.500 2354 749.500 2352Z" />
        </svg>
      </NavBar>
    </Page>
  );
}
